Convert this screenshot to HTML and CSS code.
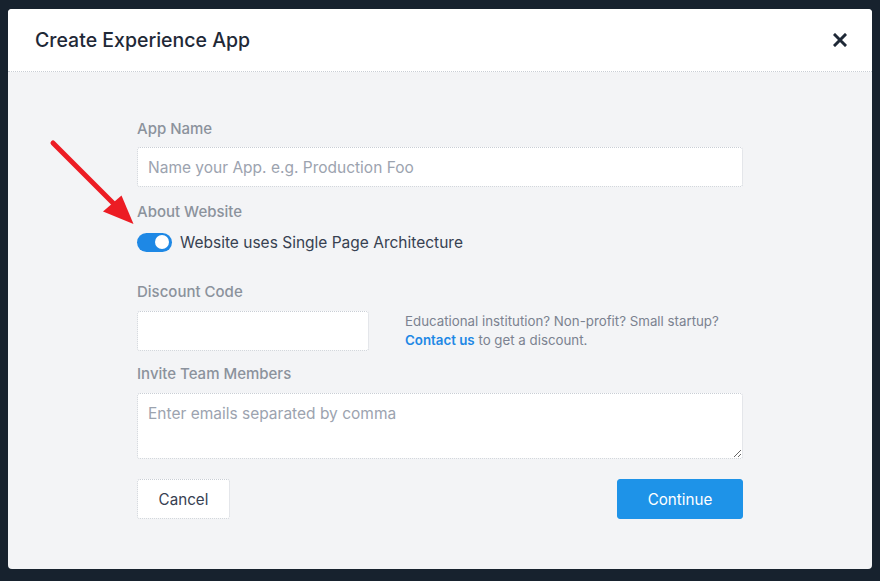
FILE: index.html
```html
<!DOCTYPE html>
<html lang="en">
<head>
<meta charset="utf-8">
<title>Create Experience App</title>
<link rel="stylesheet" href="styles.css">
</head>
<body>
<div class="modal">
  <div class="modal-header">
    <h1 class="modal-title">Create Experience App</h1>
    <button class="close-btn" aria-label="Close">
      <svg width="14" height="14" viewBox="0 0 14 14"><path d="M2 2 L12 12 M12 2 L2 12" stroke="#1f2937" stroke-width="3" stroke-linecap="square"/></svg>
    </button>
  </div>
  <div class="modal-body">
    <form class="form">
      <label class="field-label">App Name</label>
      <input class="text-input" type="text" placeholder="Name your App. e.g. Production Foo">
      <label class="field-label label-about">About Website</label>
      <div class="toggle-row">
        <span class="toggle"><span class="knob"></span></span>
        <span class="toggle-text">Website uses Single Page Architecture</span>
      </div>
      <label class="field-label label-discount">Discount Code</label>
      <div class="discount-row">
        <input class="text-input discount-input" type="text">
        <p class="hint">Educational institution? Non-profit? Small startup?<br><a class="link">Contact us</a> to get a discount.</p>
      </div>
      <label class="field-label label-invite">Invite Team Members</label>
      <textarea class="text-area" placeholder="Enter emails separated by comma"></textarea>
      <div class="actions">
        <button type="button" class="btn btn-cancel">Cancel</button>
        <button type="button" class="btn btn-continue">Continue</button>
      </div>
    </form>
  </div>
  <svg class="arrow" width="110" height="110" viewBox="40 130 110 110">
    <line x1="53" y1="143" x2="118" y2="208" stroke="#ec1c24" stroke-width="5" stroke-linecap="round"/>
    <polygon points="103,211.5 121.5,195.5 133.5,224" fill="#ec1c24"/>
  </svg>
</div>
</body>
</html>
```
FILE: styles.css
```css
* { box-sizing: border-box; }
html, body { margin: 0; padding: 0; }
body {
  background: #17222e;
  padding: 9px 8px;
  font-family: Inter, "Noto Sans", "Liberation Sans", sans-serif;
  height: 581px;
  overflow: hidden;
}
.modal {
  position: relative;
  width: 864px;
  height: 560px;
  background: #f3f4f6;
  border-radius: 4px;
  display: flex;
  flex-direction: column;
  overflow: hidden;
}
.modal-header {
  height: 63px;
  background: #fff;
  border-bottom: 1px dotted #c9ced5;
  display: flex;
  align-items: center;
  justify-content: space-between;
  padding: 0 25px 0 27px;
}
.modal-title {
  margin: 0;
  font-size: 19.5px;
  font-weight: 500;
  color: #1f2937;
}
.close-btn {
  border: 0;
  background: none;
  padding: 0;
  width: 14px;
  height: 14px;
  display: flex;
}
.modal-body {
  flex: 1;
  padding-top: 45px;
}
.form {
  width: 606px;
  margin: 0 auto;
  display: flex;
  flex-direction: column;
}
.field-label {
  font-size: 15px;
  line-height: 24px;
  font-weight: 500;
  color: #8b929c;
}
.text-input {
  margin-top: 6px;
  height: 40px;
  border: 1px dotted #c9ced5;
  border-radius: 3px;
  background: #fff;
  padding: 0 10px;
  font-family: inherit;
  font-size: 15.5px;
  color: #374151;
  outline: none;
}
.text-input::placeholder, .text-area::placeholder { color: #9ca3af; }
.label-about { margin-top: 13px; }
.toggle-row {
  margin-top: 6px;
  display: flex;
  align-items: center;
  gap: 8px;
  height: 24px;
}
.toggle {
  width: 35px;
  height: 19px;
  border-radius: 10px;
  background: #1e88e5;
  display: flex;
  align-items: center;
  justify-content: flex-end;
  padding-right: 3px;
}
.knob {
  width: 14px;
  height: 14px;
  border-radius: 50%;
  background: #fff;
}
.toggle-text {
  font-size: 15.5px;
  color: #374151;
}
.label-discount { margin-top: 26px; }
.discount-row {
  display: flex;
  align-items: center;
  gap: 36px;
  margin-top: 7px;
}
.discount-input {
  margin-top: 0;
  width: 232px;
}
.hint {
  margin: 0;
  font-size: 13.3px;
  line-height: 19px;
  color: #7b8290;
}
.link {
  color: #1e88e5;
  font-weight: 600;
}
.label-invite { margin-top: 11px; }
.text-area {
  margin-top: 7px;
  height: 66px;
  border: 1px dotted #c9ced5;
  border-radius: 3px;
  background: #fff;
  padding: 8px 10px;
  font-family: inherit;
  font-size: 15.5px;
  line-height: 24px;
  color: #374151;
  resize: vertical;
  outline: none;
}
.actions {
  margin-top: 20px;
  display: flex;
  justify-content: space-between;
}
.btn {
  height: 40px;
  border-radius: 3px;
  font-family: inherit;
  font-size: 15.2px;
  cursor: pointer;
}
.btn-cancel {
  width: 93px;
  background: #fff;
  border: 1px dotted #c9ced5;
  color: #374151;
}
.btn-continue {
  width: 126px;
  background: #1e93e8;
  border: 1px solid #1e93e8;
  color: #fff;
}
.arrow {
  position: absolute;
  left: 32px;
  top: 121px;
}
```
